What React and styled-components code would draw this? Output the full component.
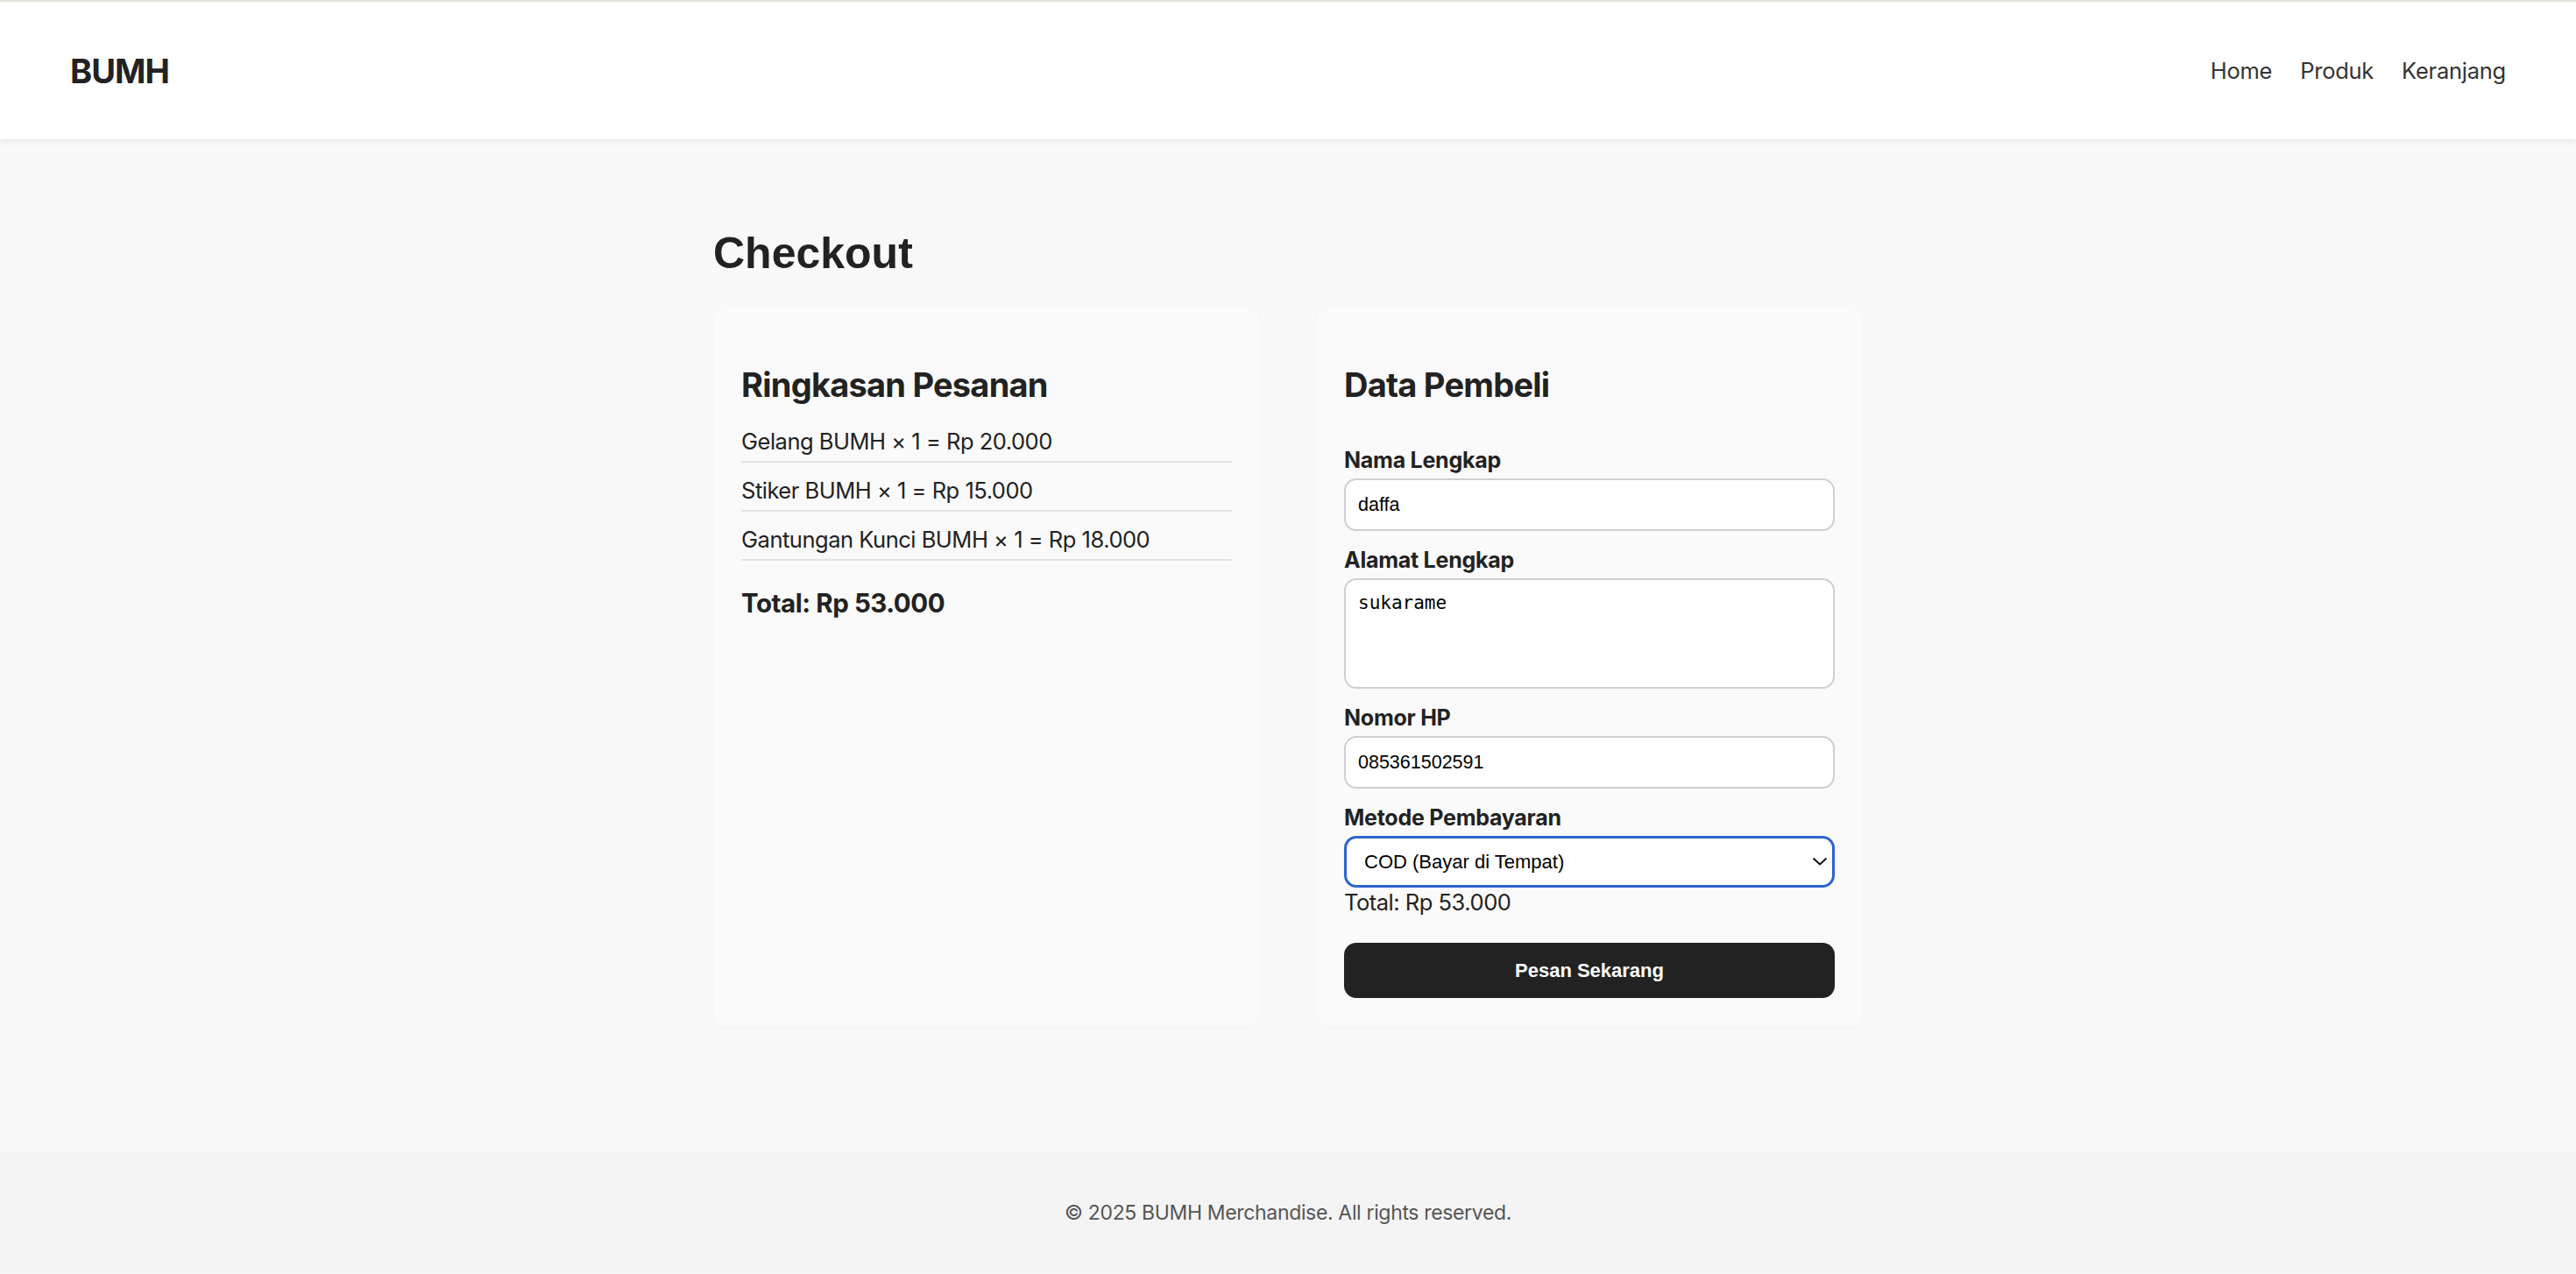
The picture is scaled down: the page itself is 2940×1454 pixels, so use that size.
import React, { useState } from "react";
import styled, { createGlobalStyle } from "styled-components";

const GlobalStyle = createGlobalStyle`
  * { box-sizing: border-box; }
  body {
    margin: 0;
    background: #f9f9f9;
    font-family: Inter, "Noto Sans", sans-serif;
    color: #222;
  }
`;

const items = [
  { name: "Gelang BUMH", qty: 1, price: 20000 },
  { name: "Stiker BUMH", qty: 1, price: 15000 },
  { name: "Gantungan Kunci BUMH", qty: 1, price: 18000 },
];

const rp = (n) => "Rp " + n.toLocaleString("id-ID").replace(/,/g, ".");

const App = () => {
  const [nama, setNama] = useState("daffa");
  const [alamat, setAlamat] = useState("sukarame");
  const [hp, setHp] = useState("085361502591");
  const [metode, setMetode] = useState("cod");
  const total = items.reduce((s, i) => s + i.qty * i.price, 0);

  return (
    <>
      <GlobalStyle />
      <Header>
        <Logo>BUMH</Logo>
        <Nav>
          <NavLink href="#">Home</NavLink>
          <NavLink href="#">Produk</NavLink>
          <NavLink href="#">Keranjang</NavLink>
        </Nav>
      </Header>

      <Main>
        <Title>Checkout</Title>
        <Grid>
          <Card>
            <CardTitle>Ringkasan Pesanan</CardTitle>
            <ItemList>
              {items.map((item) => (
                <Item key={item.name}>
                  {item.name} × {item.qty} = {rp(item.qty * item.price)}
                </Item>
              ))}
            </ItemList>
            <Total>Total: {rp(total)}</Total>
          </Card>

          <Card>
            <CardTitle>Data Pembeli</CardTitle>
            <Form onSubmit={(e) => e.preventDefault()}>
              <Group>
                <Label>Nama Lengkap</Label>
                <Input value={nama} onChange={(e) => setNama(e.target.value)} />
              </Group>
              <Group>
                <Label>Alamat Lengkap</Label>
                <TextArea
                  value={alamat}
                  onChange={(e) => setAlamat(e.target.value)}
                />
              </Group>
              <Group>
                <Label>Nomor HP</Label>
                <Input value={hp} onChange={(e) => setHp(e.target.value)} />
              </Group>
              <Label>Metode Pembayaran</Label>
              <SelectWrap>
                <Select
                  value={metode}
                  onChange={(e) => setMetode(e.target.value)}
                >
                  <option value="cod">COD (Bayar di Tempat)</option>
                  <option value="transfer">Transfer Bank</option>
                </Select>
                <Chevron width="18" height="10" viewBox="0 0 18 10">
                  <polyline
                    points="1.5,1.5 9,8.5 16.5,1.5"
                    fill="none"
                    stroke="#111"
                    strokeWidth="2"
                  />
                </Chevron>
              </SelectWrap>
              <FormTotal>Total: {rp(total)}</FormTotal>
              <SubmitButton type="submit">Pesan Sekarang</SubmitButton>
            </Form>
          </Card>
        </Grid>
      </Main>

      <Footer>© 2025 BUMH Merchandise. All rights reserved.</Footer>
    </>
  );
};

export default App;

const Header = styled.header`
  display: flex;
  align-items: center;
  justify-content: space-between;
  height: 159px;
  padding: 0 80px;
  background: #fff;
  border-top: 2px solid #e3e3d9;
  box-shadow: 0 2px 8px rgba(0, 0, 0, 0.08);
  position: relative;
`;

const Logo = styled.div`
  font-size: 38px;
  font-weight: 700;
  letter-spacing: -0.025em;
  color: #222;
`;

const Nav = styled.nav`
  display: flex;
  gap: 32px;
`;

const NavLink = styled.a`
  font-size: 25.5px;
  letter-spacing: -0.01em;
  color: #333;
  text-decoration: none;
`;

const Main = styled.main`
  width: 1312px;
  margin: 0 auto;
  padding: 102px 0 144px;
`;

const Title = styled.h1`
  margin: 0 0 33px;
  font-family: "Liberation Sans", Arial, sans-serif;
  font-size: 50px;
  font-weight: 700;
  line-height: 57px;
  color: #222;
`;

const Grid = styled.div`
  display: grid;
  grid-template-columns: 1fr 1fr;
  gap: 64px;
`;

const Card = styled.section`
  background: #fafafa;
  border-radius: 16px;
  padding: 32px;
  box-shadow: 0 1px 8px rgba(0, 0, 0, 0.022);
`;

const CardTitle = styled.h3`
  margin: 33px 0 10px;
  font-size: 38px;
  font-weight: 700;
  letter-spacing: -0.02em;
  line-height: 46px;
  color: #222;
`;

const ItemList = styled.ul`
  list-style: none;
  margin: 0;
  padding: 0;
`;

const Item = styled.li`
  padding: 15px 0 5px;
  font-size: 25.5px;
  letter-spacing: -0.019em;
  line-height: 34px;
  border-bottom: 2px solid #e3e3e3;
`;

const Total = styled.p`
  margin: 31px 0 0;
  font-size: 29.5px;
  font-weight: 700;
  letter-spacing: -0.015em;
  line-height: 34px;
`;

const Form = styled.form`
  display: flex;
  flex-direction: column;
  padding-top: 36px;
`;

const Group = styled.div`
  display: flex;
  flex-direction: column;
  margin-bottom: 16px;
`;

const Label = styled.label`
  display: block;
  padding-top: 2px;
  margin-bottom: 6px;
  font-size: 25px;
  font-weight: 700;
  letter-spacing: -0.01em;
  line-height: 30px;
  color: #222;
`;

const fieldBase = `
  width: 100%;
  border: 2px solid #cfcfcf;
  border-radius: 14px;
  background: #fff;
  color: #000;
  outline: none;
`;

const Input = styled.input`
  ${fieldBase}
  height: 60px;
  padding: 0 14px;
  font-family: "Liberation Sans", Arial, sans-serif;
  font-size: 21.5px;
`;

const TextArea = styled.textarea`
  ${fieldBase}
  height: 126px;
  padding: 14px;
  resize: none;
  font-family: "DejaVu Sans Mono", monospace;
  font-size: 21px;
`;

const SelectWrap = styled.div`
  position: relative;
`;

const Select = styled.select`
  ${fieldBase}
  height: 59px;
  padding: 0 40px 0 20px;
  border: 3px solid #2c64d2;
  appearance: none;
  font-family: "Liberation Sans", Arial, sans-serif;
  font-size: 22px;
`;

const Chevron = styled.svg`
  position: absolute;
  right: 8px;
  top: 24px;
  pointer-events: none;
`;

const FormTotal = styled.p`
  margin: 2px 0 0;
  font-size: 25.5px;
  letter-spacing: -0.019em;
  line-height: 30px;
`;

const SubmitButton = styled.button`
  margin-top: 31px;
  height: 63px;
  border: none;
  border-radius: 14px;
  background: #222;
  color: #fff;
  font-family: "Liberation Sans", Arial, sans-serif;
  font-size: 22px;
  font-weight: 700;
  cursor: pointer;
`;

const Footer = styled.footer`
  height: 138px;
  display: flex;
  align-items: center;
  justify-content: center;
  background: #f4f4f4;
  color: #555;
  font-size: 23px;
  letter-spacing: -0.015em;
`;
